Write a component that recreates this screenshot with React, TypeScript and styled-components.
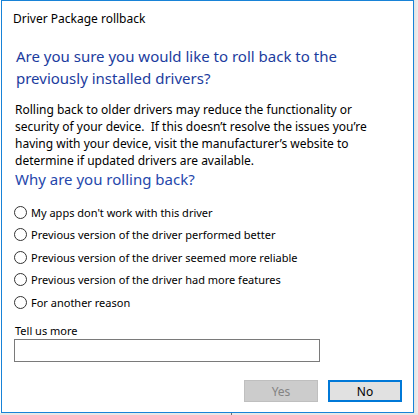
import React from "react";
import styled, { createGlobalStyle } from "styled-components";

const GlobalStyle = createGlobalStyle`
  html, body {
    margin: 0;
    padding: 0;
    background: #ffffff;
  }
  body {
    font-family: "Noto Sans", "Liberation Sans", sans-serif;
    width: 418px;
    height: 415px;
    overflow: hidden;
  }
`;

const reasons = [
  "My apps don't work with this driver",
  "Previous version of the driver performed better",
  "Previous version of the driver seemed more reliable",
  "Previous version of the driver had more features",
  "For another reason",
];

const App: React.FC = () => {
  return (
    <>
      <GlobalStyle />
      <Desktop>
        <Window>
          <TitleBar>Driver Package rollback</TitleBar>
          <Content>
            <Heading>
              Are you sure you would like to roll back to the previously
              installed drivers?
            </Heading>
            <Body>
              Rolling back to older drivers may reduce the functionality or
              security of your device.&nbsp; If this doesn’t resolve the issues
              you’re having with your device, visit the manufacturer’s website
              to determine if updated drivers are available.
            </Body>
            <SubHeading>Why are you rolling back?</SubHeading>
            <RadioList>
              {reasons.map((r) => (
                <RadioRow key={r}>
                  <RadioCircle />
                  <RadioLabel>{r}</RadioLabel>
                </RadioRow>
              ))}
            </RadioList>
            <FieldLabel>Tell us more</FieldLabel>
            <TextBox />
          </Content>
          <Footer>
            <Button disabled>Yes</Button>
            <Button primary>No</Button>
          </Footer>
        </Window>
        <BottomEdge />
      </Desktop>
    </>
  );
};

export default App;

const Desktop = styled.div`
  width: 418px;
  height: 415px;
  background: linear-gradient(to right, #ffffff 0, #ffffff 414px, #e2e2e2 414px, #efefef 418px);
  display: flex;
  flex-direction: column;
`;

const Window = styled.div`
  box-sizing: border-box;
  margin-left: 1px;
  width: 413px;
  height: 413px;
  border: 1px solid #1883d7;
  background: #ffffff;
  display: flex;
  flex-direction: column;
`;

const BottomEdge = styled.div`
  height: 2px;
  background: linear-gradient(to right, #e8e8e8 0, #e8e8e8 231px, #6f6f6f 231px, #6f6f6f 232px, #e8e8e8 232px);
`;

const TitleBar = styled.div`
  height: 30px;
  padding: 9px 0 0 11px;
  box-sizing: border-box;
  font-size: 12px;
  color: #000000;
`;

const Content = styled.div`
  padding: 14px 12px 0 12px;
  display: flex;
  flex-direction: column;
  flex: 1;
`;

const Heading = styled.div`
  max-width: 355px;
  font-size: 15px;
  line-height: 22px;
  color: #1c3c9e;
  margin: 0 0 12px 2px;
`;

const Body = styled.div`
  max-width: 360px;
  font-size: 12px;
  line-height: 17px;
  color: #000000;
  margin: 0 0 0 1px;
`;

const SubHeading = styled.div`
  font-size: 15px;
  line-height: 20px;
  color: #2547ac;
  margin: 0 0 12px 1px;
`;

const RadioList = styled.div`
  display: flex;
  flex-direction: column;
`;

const RadioRow = styled.div`
  display: flex;
  align-items: center;
  height: 22.5px;
`;

const RadioCircle = styled.span`
  box-sizing: border-box;
  width: 13px;
  height: 13px;
  border: 1px solid #333333;
  border-radius: 50%;
  background: #ffffff;
  margin-right: 4px;
`;

const RadioLabel = styled.span`
  font-size: 11px;
  color: #000000;
`;

const FieldLabel = styled.div`
  font-size: 11px;
  line-height: 16px;
  color: #000000;
  margin: 9px 0 0 1px;
`;

const TextBox = styled.div`
  box-sizing: border-box;
  width: 306px;
  height: 23px;
  border: 1px solid #7a7a7a;
  background: #ffffff;
`;

const Footer = styled.div`
  display: flex;
  justify-content: flex-end;
  gap: 10px;
  padding: 0 11px 10px 0;
`;

const Button = styled.button<{ primary?: boolean }>`
  box-sizing: border-box;
  width: 74px;
  height: 22px;
  font-family: "Noto Sans", "Liberation Sans", sans-serif;
  font-size: 12px;
  padding: 0;
  background: ${(p) => (p.disabled ? "#cccccc" : "#e1e1e1")};
  color: ${(p) => (p.disabled ? "#838383" : "#000000")};
  border: ${(p) =>
    p.primary ? "2px solid #0078d7" : p.disabled ? "1px solid #bfbfbf" : "1px solid #adadad"};
`;
